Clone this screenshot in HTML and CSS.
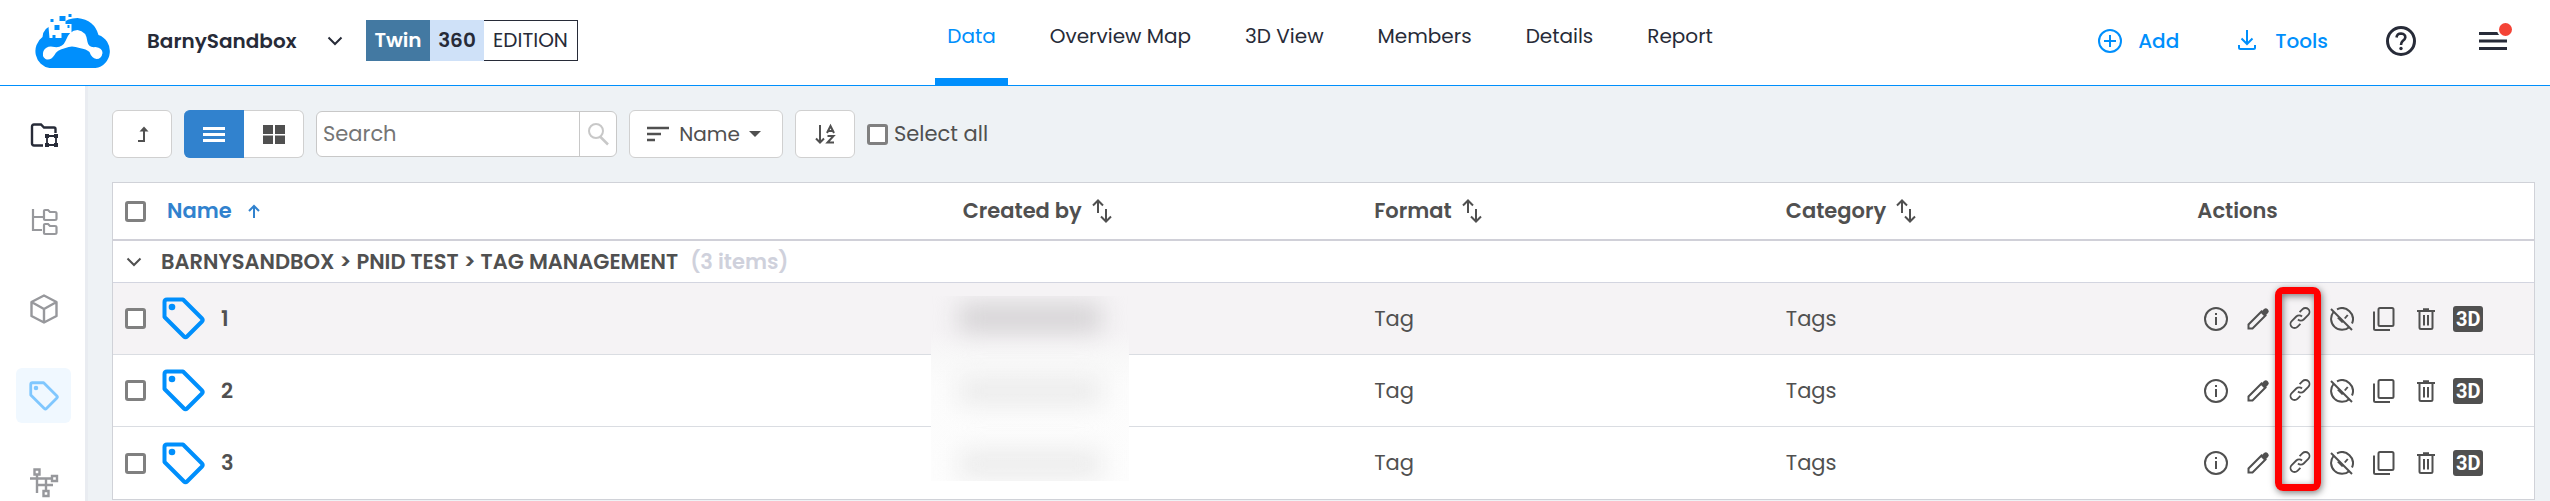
FILE: index.html
```html
<!DOCTYPE html>
<html lang="en">
<head>
    <meta charset="UTF-8">
    <meta name="viewport" content="width=device-width, initial-scale=1.0">
    <title>BarnySandbox</title>
    <link rel="stylesheet" href="styles.css">
</head>
<body>
    <!-- icon sprite -->
    <svg class="sprite" aria-hidden="true">
        <symbol id="i-tag" viewBox="0 0 43 43">
            <path d="M5 2.5H21L40 21.500Q41.500 23 40 24.500L25 39.500Q23.500 41 22 39.500L2.500 20V5Q2.500 2.500 5 2.500Z" fill="none" stroke="currentColor" stroke-width="4" stroke-linejoin="round"/>
            <circle cx="10" cy="10" r="3.300" fill="currentColor"/>
        </symbol>
        <symbol id="i-chevron" viewBox="0 0 16 10">
            <path d="M1.500 1.500L8 8L14.500 1.500" fill="none" stroke="currentColor" stroke-width="2"/>
        </symbol>
        <symbol id="i-sort" viewBox="0 0 20 24">
            <path d="M6 14V2M1 6.500L6 1.500L11 6.500M14 10V22M9 17.500L14 22.500L19 17.500" fill="none" stroke="currentColor" stroke-width="2"/>
        </symbol>
        <symbol id="i-info" viewBox="0 0 24 24">
            <circle cx="12" cy="12" r="11" fill="none" stroke="currentColor" stroke-width="2"/>
            <path d="M11 6h2v2h-2zM11 10h2v8h-2z" fill="currentColor"/>
        </symbol>
        <symbol id="i-edit" viewBox="0 0 24 24">
            <path d="M2.500 21.500V17.500L15.500 4.500L19.500 8.500L6.500 21.500Z" fill="none" stroke="currentColor" stroke-width="2"/>
            <path d="M14.500 5.500L18 2Q20 .5 21.500 2L22.300 3Q23.500 4.500 22 6L18.500 9.500Z" fill="currentColor"/>
        </symbol>
        <symbol id="i-link" viewBox="0 1 24 24">
            <path d="M10 13.500a4 4 0 0 0 5.700 0l4.600-4.600a4 4 0 0 0-5.700-5.700l-3 3M14 10.500a4 4 0 0 0-5.700 0l-4.600 4.600a4 4 0 0 0 5.700 5.700l3-3" fill="none" stroke="currentColor" stroke-width="1.800"/>
        </symbol>
        <symbol id="i-hide" viewBox="0 0 24 24">
            <path d="M7 2.300A11 11 0 0 1 22 16.500M19.500 20A11 11 0 0 1 3.500 5" fill="none" stroke="currentColor" stroke-width="2"/>
            <path d="M1 2L22 23" stroke="currentColor" stroke-width="2"/>
            <path d="M7 11L9.500 10L14 14.500L12 16ZM14 11L17 7.500L18.500 8.500L15.500 12Z" fill="currentColor"/>
        </symbol>
        <symbol id="i-copy" viewBox="0 0 24 24">
            <rect x="6.500" y="1" width="15" height="18" rx="1.500" fill="none" stroke="currentColor" stroke-width="2"/>
            <path d="M2 4.500V21.500Q2 23 3.500 23H18" fill="none" stroke="currentColor" stroke-width="2"/>
        </symbol>
        <symbol id="i-trash" viewBox="0 0 24 24">
            <path d="M3 4H21M9 2.300H15M5.500 4V20.500Q5.500 22 7 22H17Q18.500 22 18.500 20.500V4M10 8V18.500M14 8V18.500" fill="none" stroke="currentColor" stroke-width="2"/>
        </symbol>
    </svg>

    <header class="topbar">
        <div class="brand">
            <svg class="logo" viewBox="1 0 77 54" aria-label="Logo">
                <path d="M16 54A16 17 0 0 1 9 23Q10 13 19 12L28 10Q34 4 44 4Q61 6 65 21A16.500 17 0 0 1 62 54Z" fill="#008ffc"/>
                <path d="M10 37Q13 31 21 33Q29 34 32 27Q36 16 44 16Q53 17 54 28Q55 34 62 33Q69 34 69 39Q68 45 63 45Q58 44 56 38Q53 35 46 34Q38 31 32 34Q23 36 21 41Q17 47 12 45Q8 42 10 37Z" fill="#fff"/>
                <path d="M14 2H32V10H38V19H28V24H16Z" fill="#fff"/>
                <path d="M26 2h6v5h-6zM35 0h3v3h-3zM17 5h3v3h-3zM21 11h5v5h-5zM34 11h2v3h-2zM19 21h3v3h-3zM29 19h2v2h-2z" fill="#008ffc"/>
            </svg>
            <button class="project" type="button">BarnySandbox <svg class="chevron"><use href="#i-chevron"/></svg></button>
            <div class="edition">
                <span class="edition-twin">Twin</span>
                <span class="edition-360">360</span>
                <span class="edition-name">EDITION</span>
            </div>
        </div>
        <nav class="tabs">
            <a class="tab active" href="#">Data</a>
            <a class="tab" href="#">Overview Map</a>
            <a class="tab" href="#">3D View</a>
            <a class="tab" href="#">Members</a>
            <a class="tab" href="#">Details</a>
            <a class="tab" href="#">Report</a>
        </nav>
        <div class="top-actions">
            <button class="top-button" type="button">
                <svg class="icon-md" viewBox="0 0 24 24"><circle cx="12" cy="12" r="11" fill="none" stroke="currentColor" stroke-width="2"/><path d="M12 6V18M6 12H18" stroke="currentColor" stroke-width="2"/></svg>
                Add
            </button>
            <button class="top-button" type="button">
                <svg class="icon-md" viewBox="0 0 24 24"><path d="M12 1V15M6.500 9.500L12 15L17.500 9.500M4 16V18.500Q4 20 5.500 20H18.500Q20 20 20 18.500V16" fill="none" stroke="currentColor" stroke-width="2"/></svg>
                Tools
            </button>
            <button class="icon-button" type="button" aria-label="Help">
                <svg class="icon-lg" viewBox="0 0 30 30"><circle cx="15" cy="15" r="13.500" fill="none" stroke="currentColor" stroke-width="3"/><path d="M10.500 11.500Q11 7.500 15 7.500Q19.500 8 19.300 11.500Q19 13.500 16.500 15.200Q15 16.500 15 19" fill="none" stroke="currentColor" stroke-width="2.600"/><circle cx="15" cy="22.500" r="1.700" fill="currentColor"/></svg>
            </button>
            <button class="icon-button" type="button" aria-label="Menu">
                <svg class="icon-lg" viewBox="0 0 30 30"><path d="M1 7.500H29M1 15H29M1 22.500H29" stroke="currentColor" stroke-width="3"/></svg>
                <span class="dot"></span>
            </button>
        </div>
    </header>

    <div class="layout">
        <aside class="sidebar">
            <button class="side-button dark" type="button" aria-label="Project files">
                <svg class="side-icon" viewBox="0 0 30 30"><path d="M14 25.500H5Q3 25.500 3 23.500V6.500Q3 4.500 5 4.500H12L15 7.500H25Q26.500 7.500 26.500 9V13" fill="none" stroke="currentColor" stroke-width="2.400"/><path d="M18 16H27V25H18Z" fill="none" stroke="currentColor" stroke-width="1.800"/><path d="M16 14h4v4h-4zM25 14h4v4h-4zM16 23h4v4h-4zM25 23h4v4h-4z" fill="currentColor"/></svg>
            </button>
            <button class="side-button" type="button" aria-label="Folder tree">
                <svg class="side-icon" viewBox="0 0 30 30"><path d="M4 2V23H13M4 10H14M15 4Q15 3 16 3H19L21 5H26Q27.500 5 27.500 6V12Q27.500 13 26 13H16Q15 13 15 12ZM15 18Q15 17 16 17H19L21 19H26Q27.500 19 27.500 20V26Q27.500 27 26 27H16Q15 27 15 26Z" fill="none" stroke="currentColor" stroke-width="2.200"/></svg>
            </button>
            <button class="side-button" type="button" aria-label="Models">
                <svg class="side-icon" viewBox="0 0 30 30"><path d="M15 1.500L27.500 8V22L15 28.500L2.500 22V8ZM2.500 8L15 15L27.500 8M15 15V28.500" fill="none" stroke="currentColor" stroke-width="2.400" stroke-linejoin="round"/></svg>
            </button>
            <button class="side-button active" type="button" aria-label="Tags">
                <svg class="side-icon"><use href="#i-tag"/></svg>
            </button>
            <button class="side-button" type="button" aria-label="Diagrams">
                <svg class="side-icon" viewBox="0 0 30 30"><path d="M5.500 1.500H10.500V6.500H5.500ZM23 8H28V13H23ZM14.500 23H19.500V28H14.500ZM1 10.500H23M8 7V25M8 17H24M17 10.500V23" fill="none" stroke="currentColor" stroke-width="2.400"/></svg>
            </button>
        </aside>

        <main class="content">
            <div class="toolbar">
                <button class="tool" type="button" aria-label="Up one level">
                    <svg class="icon-md" viewBox="0 0 24 24"><path d="M8 19H14V7" fill="none" stroke="currentColor" stroke-width="2"/><path d="M9.500 9.500L14 4.500L18.500 9.500Z" fill="currentColor"/></svg>
                </button>
                <div class="view-switch">
                    <button class="tool selected" type="button" aria-label="List view">
                        <svg class="icon-md" viewBox="0 0 24 24"><path d="M1 6.500H23M1 12.500H23M1 18.500H23" stroke="currentColor" stroke-width="3"/></svg>
                    </button>
                    <button class="tool" type="button" aria-label="Grid view">
                        <svg class="icon-md" viewBox="0 0 24 24"><path d="M1 3h10v9H1zM13 3h10v9H13zM1 13.500h10v8.500H1zM13 13.500h10v8.500H13z" fill="currentColor"/></svg>
                    </button>
                </div>
                <div class="search">
                    <input class="search-input" type="text" placeholder="Search" aria-label="Search">
                    <button class="search-button" type="button" aria-label="Run search">
                        <svg class="icon-md" viewBox="0 0 24 24"><circle cx="10" cy="9" r="7" fill="none" stroke="currentColor" stroke-width="2"/><path d="M14 14.500L22 22.500" stroke="currentColor" stroke-width="2.500"/></svg>
                    </button>
                </div>
                <button class="tool tool-sort" type="button">
                    <svg class="icon-md" viewBox="0 0 24 24"><path d="M1 6H23M1 12H15M1 18H9" stroke="currentColor" stroke-width="2.400"/></svg>
                    Name
                    <svg class="caret" viewBox="0 0 12 6"><path d="M0 0H12L6 6Z" fill="currentColor"/></svg>
                </button>
                <button class="tool" type="button" aria-label="Sort ascending">
                    <svg class="icon-md" viewBox="0 0 24 24"><path d="M7 3V20M3 16.500L7 20.500L11 16.500M14 11L17.500 4L21 11M15.200 9H19.800M14.500 14H20.500L14.500 20.500H21" fill="none" stroke="currentColor" stroke-width="2"/></svg>
                </button>
                <label class="select-all"><input class="check" type="checkbox"> Select all</label>
            </div>

            <table class="tags">
                <colgroup>
                    <col class="col-name">
                    <col class="col-info">
                    <col class="col-info">
                    <col class="col-info">
                    <col class="col-actions">
                </colgroup>
                <thead>
                    <tr>
                        <th>
                            <div class="head-name">
                                <input class="check" type="checkbox" aria-label="Select all rows">
                                <span>Name</span>
                                <svg class="arrow" viewBox="0 0 12 14"><path d="M6 14V2M1 7L6 2L11 7" fill="none" stroke="currentColor" stroke-width="2"/></svg>
                            </div>
                        </th>
                        <th><div class="head-cell">Created by <svg class="sort"><use href="#i-sort"/></svg></div></th>
                        <th><div class="head-cell">Format <svg class="sort"><use href="#i-sort"/></svg></div></th>
                        <th><div class="head-cell">Category <svg class="sort"><use href="#i-sort"/></svg></div></th>
                        <th>Actions</th>
                    </tr>
                </thead>
                <tbody>
                    <tr class="group">
                        <td colspan="5">
                            <div class="group-cell">
                                <svg class="chevron"><use href="#i-chevron"/></svg>
                                <span class="group-path">BARNYSANDBOX &gt; PNID TEST &gt; TAG MANAGEMENT</span>
                                <span class="group-count">(3 items)</span>
                            </div>
                        </td>
                    </tr>
                    <tr class="row hovered">
                        <td><div class="name-cell"><input class="check" type="checkbox" aria-label="Select 1"><svg class="tag-icon"><use href="#i-tag"/></svg><span>1</span></div></td>
                        <td class="created">
                            <div class="redacted"><i></i><i></i><i></i></div>
                        </td>
                        <td>Tag</td>
                        <td>Tags</td>
                        <td>
                            <div class="actions">
                                <button type="button" aria-label="Info"><svg><use href="#i-info"/></svg></button>
                                <button type="button" aria-label="Edit"><svg><use href="#i-edit"/></svg></button>
                                <button type="button" aria-label="Link"><svg><use href="#i-link"/></svg><span class="highlight"></span></button>
                                <button type="button" aria-label="Hide"><svg><use href="#i-hide"/></svg></button>
                                <button type="button" aria-label="Copy"><svg><use href="#i-copy"/></svg></button>
                                <button type="button" aria-label="Delete"><svg><use href="#i-trash"/></svg></button>
                                <button type="button"><span class="badge-3d">3D</span></button>
                            </div>
                        </td>
                    </tr>
                    <tr class="row">
                        <td><div class="name-cell"><input class="check" type="checkbox" aria-label="Select 2"><svg class="tag-icon"><use href="#i-tag"/></svg><span>2</span></div></td>
                        <td></td>
                        <td>Tag</td>
                        <td>Tags</td>
                        <td>
                            <div class="actions">
                                <button type="button" aria-label="Info"><svg><use href="#i-info"/></svg></button>
                                <button type="button" aria-label="Edit"><svg><use href="#i-edit"/></svg></button>
                                <button type="button" aria-label="Link"><svg><use href="#i-link"/></svg></button>
                                <button type="button" aria-label="Hide"><svg><use href="#i-hide"/></svg></button>
                                <button type="button" aria-label="Copy"><svg><use href="#i-copy"/></svg></button>
                                <button type="button" aria-label="Delete"><svg><use href="#i-trash"/></svg></button>
                                <button type="button"><span class="badge-3d">3D</span></button>
                            </div>
                        </td>
                    </tr>
                    <tr class="row">
                        <td><div class="name-cell"><input class="check" type="checkbox" aria-label="Select 3"><svg class="tag-icon"><use href="#i-tag"/></svg><span>3</span></div></td>
                        <td></td>
                        <td>Tag</td>
                        <td>Tags</td>
                        <td>
                            <div class="actions">
                                <button type="button" aria-label="Info"><svg><use href="#i-info"/></svg></button>
                                <button type="button" aria-label="Edit"><svg><use href="#i-edit"/></svg></button>
                                <button type="button" aria-label="Link"><svg><use href="#i-link"/></svg></button>
                                <button type="button" aria-label="Hide"><svg><use href="#i-hide"/></svg></button>
                                <button type="button" aria-label="Copy"><svg><use href="#i-copy"/></svg></button>
                                <button type="button" aria-label="Delete"><svg><use href="#i-trash"/></svg></button>
                                <button type="button"><span class="badge-3d">3D</span></button>
                            </div>
                        </td>
                    </tr>
                </tbody>
            </table>
        </main>
    </div>
</body>
</html>
```
FILE: styles.css
```css
* {
    box-sizing: border-box;
}

body {
    margin: 0;
    height: 100vh;
    display: flex;
    flex-direction: column;
    overflow: hidden;
    font-family: Poppins, Inter, sans-serif;
    font-size: 21px;
    line-height: 30px;
    color: #505050;
    background: #eef2f5;
}

button {
    padding: 0;
    border: none;
    background: none;
    font: inherit;
    color: inherit;
    cursor: pointer;
}

svg {
    display: block;
    flex: none;
}

.sprite {
    position: absolute;
    width: 0;
    height: 0;
}

.icon-md {
    width: 24px;
    height: 24px;
}

.icon-lg {
    width: 30px;
    height: 30px;
}

.chevron {
    width: 16px;
    height: 10px;
}

/* top bar */
.topbar {
    display: flex;
    justify-content: space-between;
    flex: none;
    height: 86px;
    padding: 0 42px 0 34px;
    background: #fff;
    border-bottom: 1px solid #008ffc;
    color: #272b38;
    font-size: 20px;
}

.brand {
    display: flex;
    align-items: center;
    padding-bottom: 4px;
}

.logo {
    width: 78px;
    height: 54px;
    margin-right: 35px;
}

.project {
    display: flex;
    align-items: center;
    justify-content: space-between;
    width: 196px;
    margin-right: 23px;
    font-weight: 600;
}

.edition {
    display: flex;
    line-height: 41px;
    text-align: center;
}

.edition-twin {
    width: 64px;
    background: #4379a2;
    color: #fff;
    font-weight: 600;
}

.edition-360 {
    width: 54px;
    background: #cfe1f8;
    font-weight: 600;
}

.edition-name {
    width: 94px;
    border: 1px solid #272b38;
    border-left: none;
    line-height: 39px;
}

.tabs {
    display: flex;
    gap: 30px;
}

.tab {
    display: flex;
    align-items: center;
    padding: 0 12px 6px;
    border-bottom: 7px solid transparent;
    color: inherit;
    text-decoration: none;
}

.tab.active {
    color: #008ffc;
    border-color: #008ffc;
}

.top-actions {
    display: flex;
    align-items: center;
    padding-bottom: 4px;
}

.top-button {
    display: flex;
    align-items: center;
    gap: 16px;
    padding: 0 28px;
    color: #008ffc;
    font-weight: 500;
}

.top-button:first-child {
    padding-left: 16px;
}

.icon-button {
    position: relative;
    margin-left: 30px;
}

.icon-button + .icon-button {
    margin-left: 62px;
}

.dot {
    position: absolute;
    top: -3px;
    right: -4px;
    width: 13px;
    height: 13px;
    border-radius: 50%;
    background: #f44336;
    box-shadow: 0 0 0 2px #fff;
}

/* left rail */
.layout {
    display: flex;
    flex: 1;
    min-height: 0;
}

.sidebar {
    display: flex;
    flex-direction: column;
    gap: 32px;
    flex: none;
    width: 88px;
    padding: 21px 14px 0 16px;
    background: #fff;
    border-right: 3px solid #e9ecf1;
    overflow: hidden;
}

.side-button {
    display: flex;
    align-items: center;
    justify-content: center;
    flex: none;
    width: 55px;
    height: 55px;
    border-radius: 6px;
    color: #97989c;
}

.side-button.dark {
    color: #272b38;
}

.side-button.active {
    background: #f0f8ff;
    color: #80c7fe;
}

.side-icon {
    width: 30px;
    height: 30px;
}

/* toolbar */
.content {
    flex: 1;
    min-width: 0;
    padding: 24px 15px 0 24px;
}

.toolbar {
    display: flex;
    align-items: center;
    gap: 12px;
    margin-bottom: 24px;
}

.tool {
    display: flex;
    align-items: center;
    justify-content: center;
    width: 60px;
    height: 48px;
    background: #fff;
    border: 1px solid #d0d0d0;
    border-radius: 6px;
}

.view-switch {
    display: flex;
}

.view-switch .tool {
    border-radius: 0 6px 6px 0;
    border-left: none;
}

.view-switch .selected {
    border-color: #3182ce;
    border-radius: 6px 0 0 6px;
    background: #3182ce;
    color: #fff;
}

.search {
    display: flex;
    width: 301px;
    height: 46px;
    border: 1px solid #c8c8c8;
    border-radius: 6px;
    background: #fff;
}

.search-input {
    flex: 1;
    min-width: 0;
    padding: 0 6px;
    border: none;
    background: none;
    font: inherit;
}

.search-input::placeholder {
    color: #757575;
}

.search-button {
    display: flex;
    align-items: center;
    justify-content: center;
    width: 37px;
    border-left: 1px solid #c8c8c8;
    color: #c8c8c8;
}

.tool-sort {
    justify-content: space-between;
    width: 154px;
    padding: 0 21px 0 16px;
    font-size: 20px;
}

.caret {
    width: 12px;
    height: 6px;
}

.select-all {
    display: flex;
    align-items: center;
    gap: 6px;
}

.check {
    appearance: none;
    flex: none;
    width: 21px;
    height: 21px;
    margin: 0;
    border: 3px solid #808080;
    border-radius: 3px;
    background: #fff;
}

/* table */
.tags {
    width: 100%;
    table-layout: fixed;
    border: 1px solid #d0d2d8;
    border-spacing: 0;
    background: #fff;
}

.col-name {
    width: 34.6%;
}

.col-info {
    width: 17%;
}

.col-actions {
    width: 14.4%;
}

.tags th,
.tags td {
    padding: 0 12px;
    text-align: left;
}

.tags th {
    height: 58px;
    border-bottom: 2px solid #d0d0d8;
    font-weight: 600;
}

.head-name,
.head-cell,
.group-cell,
.name-cell {
    display: flex;
    align-items: center;
}

.head-name {
    gap: 16px;
    color: #3182ce;
}

.head-name span {
    margin-left: 5px;
}

.head-cell {
    gap: 10px;
}

.arrow {
    width: 12px;
    height: 14px;
}

.sort {
    width: 20px;
    height: 24px;
}

.group td {
    height: 42px;
    border-bottom: 1px solid #d3d5e0;
    font-weight: 600;
}

.group-cell {
    padding-left: 1px;
}

.group-path {
    margin: 0 12px 0 19px;
}

.group-count {
    color: #cfd1dc;
}

.row td {
    height: 72px;
    border-bottom: 1px solid #dadde2;
}

.row:last-child td {
    border-bottom: none;
}

.row.hovered {
    background: #f5f3f5;
}

.name-cell {
    gap: 16px;
    font-weight: 600;
}

.tag-icon {
    width: 43px;
    height: 43px;
    color: #008ffc;
}

.actions {
    display: flex;
    gap: 8px;
    padding-left: 2px;
}

.actions button {
    display: flex;
    align-items: center;
    justify-content: center;
    position: relative;
    width: 34px;
    height: 34px;
}

.actions svg {
    width: 24px;
    height: 24px;
}

.badge-3d {
    width: 30px;
    border-radius: 3px;
    background: #505050;
    color: #fff;
    font-family: Roboto, sans-serif;
    font-size: 20px;
    font-weight: 700;
    line-height: 26px;
}

/* callout around the link buttons of all rows */
.highlight {
    position: absolute;
    top: -15px;
    left: -8px;
    width: 46px;
    height: 204px;
    border: 7px solid #f00;
    border-radius: 8px;
    box-shadow: 1px 2px 7px rgba(0, 0, 0, 0.5), inset 1px 2px 7px rgba(0, 0, 0, 0.5);
    z-index: 1;
}

/* hidden user names */
.created {
    position: relative;
}

.redacted {
    position: absolute;
    top: 13px;
    left: -20px;
    width: 198px;
    height: 185px;
    padding: 8px 28px;
    overflow: hidden;
    background: linear-gradient(#f5f3f5 35px, #f9f9f9 65px, #fcfcfc 90px, #fdfdfd);
}

.redacted i {
    display: block;
    height: 28px;
    margin-bottom: 45px;
    background: #ebebeb;
    filter: blur(12px);
}

.redacted i:first-child {
    background: #d4d2d4;
}
```
